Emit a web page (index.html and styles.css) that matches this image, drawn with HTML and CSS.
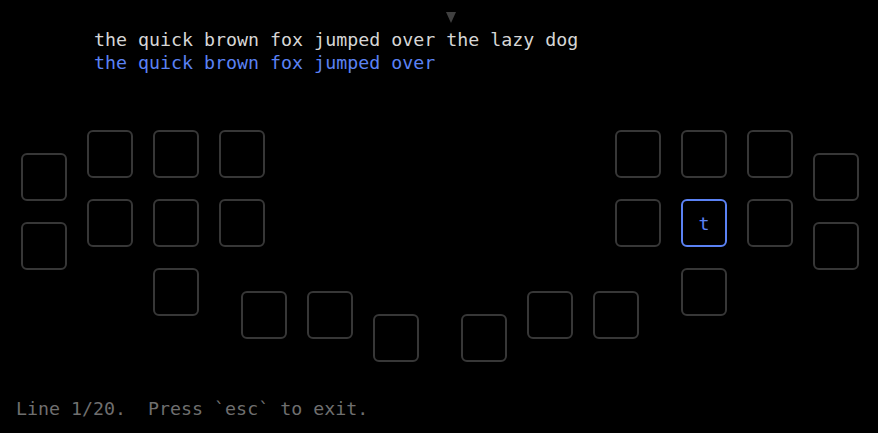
FILE: index.html
```html
<!DOCTYPE html>
<html>
<head>
<meta charset="utf-8">
<link rel="stylesheet" href="styles.css">
</head>
<body>
<div class="app">
  <div class="prompt">
    <div class="cursor-row"><span class="cursor"></span></div>
    <div class="line target">the quick brown fox jumped over the lazy dog</div>
    <div class="line typed">the quick brown fox jumped over</div>
  </div>

  <div class="keyboard">
    <div class="half half-left">
      <div class="fingers">
        <div class="col outer"><div class="key"></div><div class="key"></div></div>
        <div class="col"><div class="key"></div><div class="key"></div></div>
        <div class="col"><div class="key"></div><div class="key"></div><div class="key"></div></div>
        <div class="col"><div class="key"></div><div class="key"></div></div>
      </div>
      <div class="thumbs thumbs-left">
        <div class="key"></div>
        <div class="key"></div>
        <div class="key low"></div>
      </div>
    </div>
    <div class="half half-right">
      <div class="fingers">
        <div class="col"><div class="key"></div><div class="key"></div></div>
        <div class="col"><div class="key"></div><div class="key active">t</div><div class="key"></div></div>
        <div class="col"><div class="key"></div><div class="key"></div></div>
        <div class="col outer"><div class="key"></div><div class="key"></div></div>
      </div>
      <div class="thumbs thumbs-right">
        <div class="key low"></div>
        <div class="key"></div>
        <div class="key"></div>
      </div>
    </div>
  </div>

  <div class="status">Line 1/20.  Press `esc` to exit.</div>
</div>
</body>
</html>
```

FILE: styles.css
```css
html, body {
  margin: 0;
  padding: 0;
  background: #000;
}

body {
  width: 878px;
  height: 433px;
  overflow: hidden;
  font-family: "DejaVu Sans Mono", "Liberation Mono", monospace;
  font-size: 18.3px;
  line-height: 23px;
  color: #d6d6d6;
}

.app {
  display: flex;
  flex-direction: column;
}

.prompt {
  padding-left: 94px;
}

.cursor-row {
  height: 28px;
  padding-left: 32ch;
  box-sizing: border-box;
  padding-top: 12px;
  display: flex;
}

.cursor {
  display: block;
  width: 0;
  height: 0;
  margin-left: 0;
  border-left: 5.5px solid transparent;
  border-right: 5.5px solid transparent;
  border-top: 11px solid #404040;
}

.line {
  white-space: pre;
}

.target {
  color: #d6d6d6;
}

.typed {
  color: #5b82f4;
}

.keyboard {
  display: flex;
  align-items: flex-start;
  gap: 42px;
  margin-top: 56px;
  padding-left: 21px;
}

.half {
  display: flex;
  flex-direction: column;
  align-items: flex-start;
}

.fingers {
  display: flex;
  align-items: flex-start;
  gap: 20px;
}

.half-right .fingers {
  margin-left: 154px;
}

.col {
  display: flex;
  flex-direction: column;
  gap: 21px;
}

.col.outer {
  margin-top: 23px;
}

.thumbs {
  display: flex;
  align-items: flex-start;
  gap: 20px;
  margin-top: -25px;
}

.thumbs-left {
  margin-left: 220px;
}

.key {
  width: 46px;
  height: 48px;
  box-sizing: border-box;
  border: 2px solid #373737;
  border-radius: 6px;
  display: flex;
  align-items: center;
  justify-content: center;
  color: #5b82f4;
}

.key.low {
  margin-top: 23px;
}

.key.active {
  border-color: #5b82f4;
}

.status {
  margin-top: 35px;
  padding-left: 16px;
  color: #6f6f6f;
  white-space: pre;
}
```
